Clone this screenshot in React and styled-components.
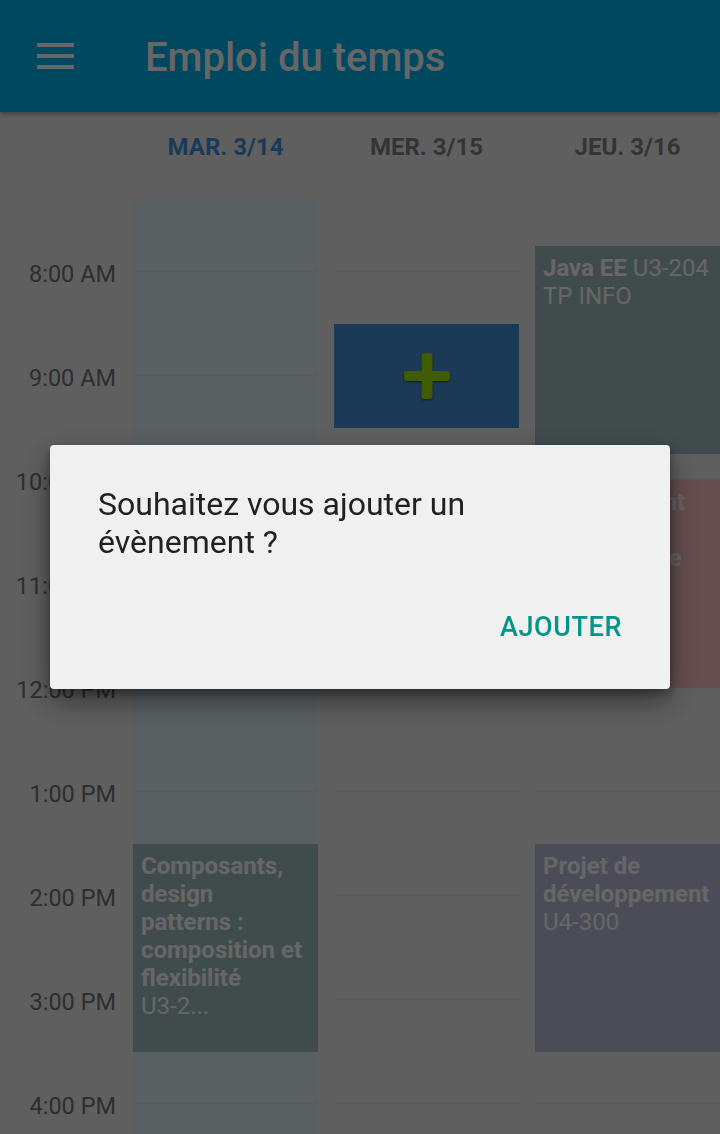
import React from "react";
import styled, { createGlobalStyle } from "styled-components";

const GlobalStyle = createGlobalStyle`
  html, body {
    margin: 0;
    padding: 0;
    background: #eeeeee;
    font-family: Roboto, "Noto Sans", "Liberation Sans", sans-serif;
  }
  * {
    box-sizing: border-box;
  }
`;

// une heure = 104px, la ligne de 8h tombe à 74px du haut de la grille
const HOUR = 104;
const FIRST_LINE = 74;
const topFor = (minutes) => ((minutes - 480) * HOUR) / 60 + FIRST_LINE;

const Page = styled.div`
  height: 100vh;
  overflow: hidden;
  display: flex;
  flex-direction: column;
  background: #eeeeee;
`;

const Toolbar = styled.header`
  position: relative;
  z-index: 2;
  flex: 0 0 112px;
  display: flex;
  align-items: center;
  padding-left: 37px;
  background: #00b4f0;
  box-shadow: 0 2px 5px rgba(0, 0, 0, 0.35);
`;

const MenuButton = styled.button`
  display: flex;
  padding: 0;
  border: none;
  background: none;
  margin-top: -1px;
`;

const Title = styled.h1`
  margin: 4px 0 0 71px;
  color: #ffffff;
  font-size: 40px;
  font-weight: 500;
  line-height: 48px;
`;

const DayHeader = styled.div`
  flex: 0 0 86px;
  display: grid;
  grid-template-columns: repeat(3, 1fr);
  column-gap: 16px;
  padding: 21px 0 0 133px;
`;

const DayLabel = styled.div`
  text-align: center;
  font-size: 24px;
  font-weight: 700;
  line-height: 28px;
  color: ${(p) => (p.$today ? "#4491dc" : "#828282")};
`;

const Body = styled.div`
  flex: 1;
  display: flex;
  min-height: 0;
`;

const TimeColumn = styled.div`
  flex: 0 0 133px;
  display: flex;
  flex-direction: column;
  padding: ${FIRST_LINE - HOUR / 2 + 2}px 17px 0 0;
`;

const TimeLabel = styled.div`
  flex: 0 0 ${HOUR}px;
  display: flex;
  align-items: center;
  justify-content: flex-end;
  font-size: 23.5px;
  color: #747474;
`;

const Days = styled.div`
  flex: 1;
  display: grid;
  grid-template-columns: repeat(3, 1fr);
  column-gap: 16px;
`;

const DayColumn = styled.div`
  position: relative;
  background-color: ${(p) => (p.$today ? "#e1eef5" : "transparent")};
  background-image: linear-gradient(to bottom, #e4e4e4 0, #e4e4e4 1px, transparent 1px);
  background-size: 100% ${HOUR}px;
  background-position: 0 ${FIRST_LINE - 1}px;
`;

const EventBlock = styled.div`
  position: absolute;
  left: 0;
  right: 0;
  padding: 8px 9px 8px 8px;
  overflow: hidden;
  background: ${(p) => p.$color};
  color: #ffffff;
  font-size: 24px;
  line-height: 28px;
`;

const EventTitle = styled.b`
  font-weight: 700;
`;

// un mot du lieu ne se coupe jamais sur son tiret
const Word = styled.span`
  white-space: nowrap;
`;

const AddBlock = styled(EventBlock)`
  display: flex;
  align-items: center;
  justify-content: center;
  padding: 0;
  svg {
    filter: drop-shadow(0 1px 1px rgba(0, 0, 0, 0.5));
  }
`;

const Overlay = styled.div`
  position: fixed;
  inset: 0;
  z-index: 10;
  display: flex;
  align-items: center;
  justify-content: center;
  background: rgba(0, 0, 0, 0.6);
`;

const Dialog = styled.div`
  width: 620px;
  height: 244px;
  display: flex;
  flex-direction: column;
  padding: 40px 48px 0;
  background: #f0f0f0;
  border-radius: 4px;
  box-shadow: 0 12px 30px rgba(0, 0, 0, 0.45), 0 4px 10px rgba(0, 0, 0, 0.3);
`;

const Message = styled.p`
  margin: 0;
  font-size: 32px;
  line-height: 38px;
  color: #212121;
`;

const Actions = styled.div`
  display: flex;
  justify-content: flex-end;
  margin-top: 38px;
`;

const TextButton = styled.button`
  padding: 0;
  border: none;
  background: none;
  font-family: inherit;
  font-size: 27px;
  font-weight: 500;
  letter-spacing: 0.6px;
  line-height: 56px;
  color: #009688;
`;

const MenuIcon = () => (
  <svg width="37" height="26" viewBox="0 0 37 26">
    <rect x="0" y="0" width="37" height="4" fill="#ffffff" />
    <rect x="0" y="11" width="37" height="4" fill="#ffffff" />
    <rect x="0" y="22" width="37" height="4" fill="#ffffff" />
  </svg>
);

const PlusIcon = () => (
  <svg width="46" height="46" viewBox="0 0 46 46">
    <rect x="17.5" y="0" width="11" height="46" rx="3" fill="#a2e600" />
    <rect x="0" y="18" width="46" height="10" rx="3" fill="#a2e600" />
  </svg>
);

const days = [
  { label: "MAR. 3/14", today: true },
  { label: "MER. 3/15" },
  { label: "JEU. 3/16" },
];

const hours = ["8:00 AM", "9:00 AM", "10:00 AM", "11:00 AM", "12:00 PM", "1:00 PM", "2:00 PM", "3:00 PM", "4:00 PM"];

const events = [
  { day: 0, start: 810, end: 930, color: "#a0bebe", title: "Composants, design patterns\u00a0: composition et flexibilité", detail: "U3-2..." },
  { day: 2, start: 465, end: 585, color: "#a0bebe", title: "Java EE", detail: "U3-204 TP INFO" },
  { day: 2, start: 600, end: 720, color: "#ffc3c3", title: "Management de projet informatique", detail: "U2-105" },
  { day: 2, start: 810, end: 930, color: "#bebedc", title: "Projet de développement", detail: "U4-300" },
];

const pending = { day: 1, start: 510, end: 570 };

const place = (e) => ({ top: topFor(e.start), height: ((e.end - e.start) * HOUR) / 60 });

const Event = ({ event }) => (
  <EventBlock $color={event.color} style={place(event)}>
    <EventTitle>{event.title}</EventTitle>
    {event.detail.split(" ").map((w, i) => (
      <React.Fragment key={i}>
        {" "}
        <Word>{w}</Word>
      </React.Fragment>
    ))}
  </EventBlock>
);

export default function App() {
  return (
    <>
      <GlobalStyle />
      <Page>
        <Toolbar>
          <MenuButton aria-label="menu">
            <MenuIcon />
          </MenuButton>
          <Title>Emploi du temps</Title>
        </Toolbar>
        <DayHeader>
          {days.map((d) => (
            <DayLabel key={d.label} $today={d.today}>
              {d.label}
            </DayLabel>
          ))}
        </DayHeader>
        <Body>
          <TimeColumn>
            {hours.map((h) => (
              <TimeLabel key={h}>{h}</TimeLabel>
            ))}
          </TimeColumn>
          <Days>
            {days.map((d, i) => (
              <DayColumn key={d.label} $today={d.today}>
                {events
                  .filter((e) => e.day === i)
                  .map((e) => (
                    <Event key={e.title} event={e} />
                  ))}
                {pending.day === i && (
                  <AddBlock $color="#4491dc" style={place(pending)}>
                    <PlusIcon />
                  </AddBlock>
                )}
              </DayColumn>
            ))}
          </Days>
        </Body>
      </Page>
      <Overlay>
        <Dialog>
          <Message>Souhaitez vous ajouter un évènement&nbsp;?</Message>
          <Actions>
            <TextButton>AJOUTER</TextButton>
          </Actions>
        </Dialog>
      </Overlay>
    </>
  );
}
